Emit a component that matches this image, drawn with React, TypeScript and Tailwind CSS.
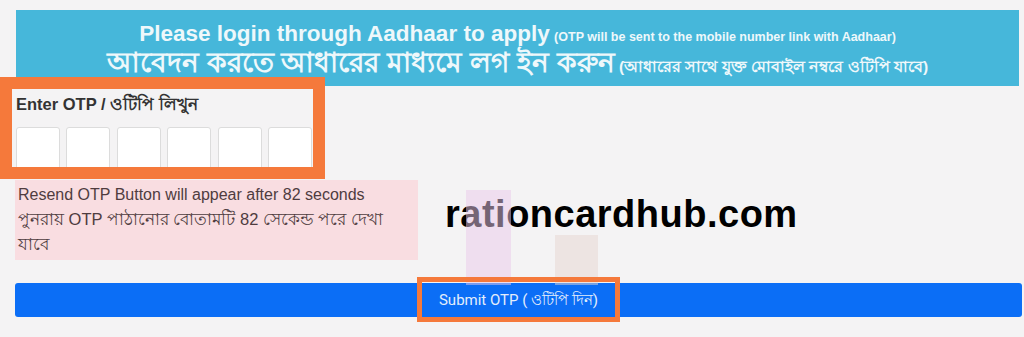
const otpSlots = [0, 1, 2, 3, 4, 5];

export default function App() {
  return (
    <div className="relative w-[1024px] h-[337px] overflow-hidden bg-[#f4f3f4] font-['Liberation_Sans','Noto_Sans',sans-serif]">
      <div className="pl-[15px] pr-[2px] pt-[10px]">
        {/* Header */}
        <div className="ml-px mr-[3px] h-[76px] bg-[#46b7da] text-[#eef8fb] flex flex-col items-center justify-center pt-[7px]">
          <p className="leading-[24px] font-bold">
            <span className="text-[22.5px]">Please login through Aadhaar to apply</span>{' '}
            <span className="text-[12.5px]">(OTP will be sent to the mobile number link with Aadhaar)</span>
          </p>
          <p className="leading-[28px] font-bold">
            <span className="text-[28px]">আবেদন করতে আধারের মাধ্যমে লগ ইন করুন</span>{' '}
            <span className="text-[15.5px]">(আধারের সাথে যুক্ত মোবাইল নম্বরে ওটিপি যাবে)</span>
          </p>
        </div>

        {/* OTP */}
        <div className="pl-px pt-[8px]">
          <p className="text-[16.5px] leading-[20px] font-bold text-[#333]">Enter OTP / ওটিপি লিখুন</p>
          <div className="flex gap-[6.4px] mt-[13px]">
            {otpSlots.map((i) => (
              <div key={i} className="w-[44px] h-[46px] bg-white border border-[#dcdcdc] rounded-[3px]" />
            ))}
          </div>
        </div>

        {/* Resend notice + watermark */}
        <div className="flex mt-[7px]">
          <div className="w-[403px] h-[80px] bg-[#f9dde1] text-[#4f3c3f] text-[16px] leading-[25px] pl-[3px] pt-[2px]">
            <p>Resend OTP Button will appear after 82 seconds</p>
            <p className="text-[16.5px]">পুনরায় OTP পাঠানোর বোতামটি 82 সেকেন্ড পরে দেখা</p>
            <p className="text-[16.5px]">যাবে</p>
          </div>
          <p className="ml-[27px] mt-[15px] text-[38px] leading-[38px] font-bold text-black tracking-[0.5px]">
            rationcardhub.com
          </p>
        </div>

        {/* Submit */}
        <button className="mt-[23px] w-full h-[34px] bg-[#0b6ef6] rounded-[3px] text-[15px] font-normal text-[#e3edfb] font-['Roboto',sans-serif]">
          Submit OTP ( ওটিপি দিন)
        </button>
      </div>

      {/* faint watermark bars */}
      <div className="absolute left-[466px] top-[190px] w-[45px] h-[95px] bg-[#e9c9ea] opacity-50" />
      <div className="absolute left-[555px] top-[235px] w-[43px] h-[50px] bg-[#e6d6cf] opacity-50" />

      {/* orange highlight boxes */}
      <div className="absolute left-0 top-[77px] w-[325px] h-[102px] border-[12px] border-[#f5793b]" />
      <div className="absolute left-[417px] top-[277px] w-[203px] h-[45px] border-[5px] border-[#f5793b]" />
    </div>
  );
}
